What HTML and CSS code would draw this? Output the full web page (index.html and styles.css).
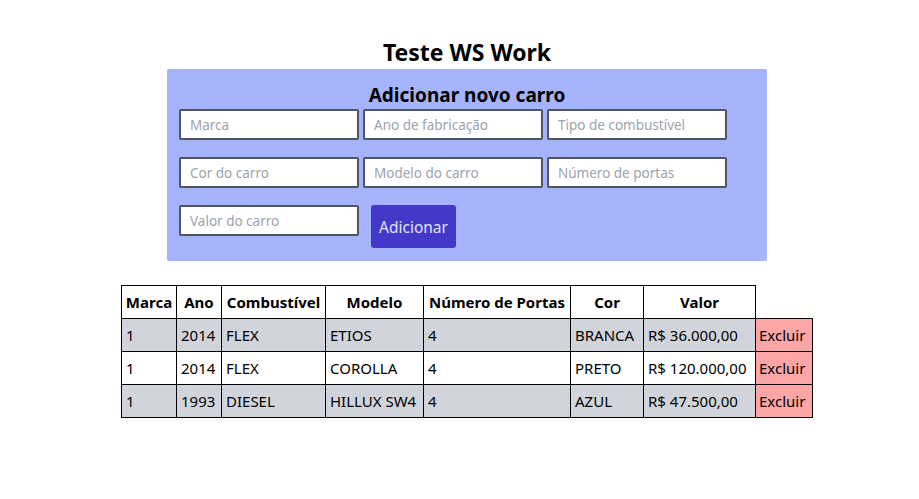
FILE: index.html
```html
<!DOCTYPE html>
<html lang="pt-BR">
<head>
<meta charset="utf-8">
<title>Teste WS Work</title>
<link rel="stylesheet" href="styles.css">
</head>
<body>
<div class="page">
  <h1 class="title">Teste WS Work</h1>
  <form class="card">
    <h2 class="card-title">Adicionar novo carro</h2>
    <div class="fields">
      <div class="row">
        <input class="field" placeholder="Marca">
        <input class="field" placeholder="Ano de fabricação">
        <input class="field" placeholder="Tipo de combustível">
      </div>
      <div class="row">
        <input class="field" placeholder="Cor do carro">
        <input class="field" placeholder="Modelo do carro">
        <input class="field" placeholder="Número de portas">
      </div>
      <div class="row row-last">
        <input class="field" placeholder="Valor do carro">
        <button type="button" class="btn">Adicionar</button>
      </div>
    </div>
  </form>
  <table class="cars">
    <colgroup>
      <col class="c1"><col class="c2"><col class="c3"><col class="c4"><col class="c5"><col class="c6"><col class="c7"><col class="c8">
    </colgroup>
    <thead>
      <tr><th>Marca</th><th>Ano</th><th>Combustível</th><th>Modelo</th><th>Número de Portas</th><th>Cor</th><th>Valor</th></tr>
    </thead>
    <tbody>
      <tr class="odd"><td>1</td><td>2014</td><td>FLEX</td><td>ETIOS</td><td>4</td><td>BRANCA</td><td>R$ 36.000,00</td><td class="del">Excluir</td></tr>
      <tr><td>1</td><td>2014</td><td>FLEX</td><td>COROLLA</td><td>4</td><td>PRETO</td><td>R$ 120.000,00</td><td class="del">Excluir</td></tr>
      <tr class="odd"><td>1</td><td>1993</td><td>DIESEL</td><td>HILLUX SW4</td><td>4</td><td>AZUL</td><td>R$ 47.500,00</td><td class="del">Excluir</td></tr>
    </tbody>
  </table>
</div>
</body>
</html>
```
FILE: styles.css
```css
* { box-sizing: border-box; }
html, body { margin: 0; padding: 0; background: #fff; }
body { font-family: "Noto Sans", "Open Sans", sans-serif; color: #000; }
.page {
  padding-left: 15px;
  display: flex;
  flex-direction: column;
  align-items: center;
}
.title {
  margin: 36px 0 0;
  font-size: 23px;
  line-height: 33px;
  font-weight: 700;
}
.card {
  width: 600px;
  background: #a5b4fc;
  border-radius: 2px;
  padding: 12px 12px 13px;
}
.card-title {
  margin: 0;
  text-align: center;
  font-size: 19px;
  line-height: 28px;
  font-weight: 700;
}
.fields { display: flex; flex-direction: column; gap: 17px; }
.row { display: flex; gap: 4px; align-items: flex-start; }
.row-last { gap: 12px; }
.field {
  width: 180px;
  height: 31px;
  border: 2px solid #4b5563;
  border-radius: 2px;
  background: #fff;
  padding: 0 9px;
  font-family: inherit;
  font-size: 13.5px;
  color: #111;
  outline: none;
}
.field::placeholder { color: #9ca3af; }
.btn {
  height: 43px;
  padding: 0 8px;
  border: none;
  border-radius: 3px;
  background: #4338ca;
  color: #e0e7ff;
  font-family: inherit;
  font-size: 15.5px;
}
.cars {
  margin-top: 24px;
  border-collapse: collapse;
  table-layout: fixed;
  width: 691px;
  font-size: 15px;
}
.c1 { width: 55px; } .c2 { width: 45px; } .c3 { width: 104px; } .c4 { width: 98px; }
.c5 { width: 147px; } .c6 { width: 73px; } .c7 { width: 112px; } .c8 { width: 57px; }
.cars th, .cars td {
  border: 1px solid #000;
  height: 33px;
  padding: 0 4px;
  line-height: 24px;
  white-space: nowrap;
  overflow: hidden;
}
.cars th { text-align: center; font-weight: 700; }
.cars td { text-align: left; }
.cars tr.odd td { background: #d1d5db; }
.cars td.del, .cars tr.odd td.del { background: #fca5a5; padding: 0 3px; }
.cars th:first-child { padding: 0 3px; }
```
